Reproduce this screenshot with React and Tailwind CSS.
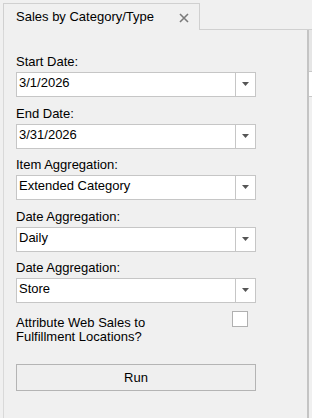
import React from 'react';

const fields = [
  { label: 'Start Date:', value: '3/1/2026' },
  { label: 'End Date:', value: '3/31/2026' },
  { label: 'Item Aggregation:', value: 'Extended Category' },
  { label: 'Date Aggregation:', value: 'Daily' },
  { label: 'Date Aggregation:', value: 'Store' },
];

const ComboBox = ({ value }) => (
  <div className="flex h-[25px] w-[240px] border border-[#c6c6c6] bg-white">
    <span className="flex-1 pl-[2px] pt-px leading-[17px]">{value}</span>
    <div className="flex w-[20px] items-center justify-center border-l border-[#c6c6c6]">
      <svg width="7" height="4" viewBox="0 0 7 4" className="-mt-px">
        <path d="M0 0h7L3.5 4z" fill="#555" />
      </svg>
    </div>
  </div>
);

export default function App() {
  return (
    <div className="flex h-[418px] w-[312px] flex-col overflow-hidden bg-[#f0f0f0] font-['Liberation_Sans',Arial,sans-serif] text-[13px] text-black">
      {/* tab strip */}
      <div className="flex h-[30px]">
        <div className="ml-[3px] mt-[3px] flex h-[27px] w-[197px] items-start justify-between border-x border-t border-[#d0d0d0] pl-[12px] pr-[10px] pt-[4px]">
          <span className="leading-[17px]">Sales by Category/Type</span>
          <svg width="10" height="10" viewBox="0 0 10 10" className="mt-[5px]">
            <path d="M1 1l8 8M9 1L1 9" stroke="#7a7a7a" strokeWidth="1.6" />
          </svg>
        </div>
        <div className="flex-1 border-b border-[#d0d0d0]" />
      </div>

      <div className="flex flex-1">
        {/* form panel */}
        <div className="ml-[3px] flex flex-1 flex-col border-l border-[#d9d9d9] pl-[12px] pt-[23px]">
          {fields.map((f, i) => (
            <div key={i} className={i > 0 ? 'mt-[7.5px]' : ''}>
              <div className="mb-[2px] leading-[17px]">{f.label}</div>
              <ComboBox value={f.value} />
            </div>
          ))}

          <div className="mt-[8px] flex w-[232px] justify-between">
            <div className="pt-[5px] leading-[14px]">
              Attribute Web Sales to
              <br />
              Fulfillment Locations?
            </div>
            <div className="h-[16px] w-[16px] border border-[#b0b0b0] bg-white" />
          </div>

          <button className="mt-[20px] h-[27px] w-[240px] border border-[#b4b4b4] bg-[#efefef] leading-[17px]">
            Run
          </button>
        </div>

        {/* neighbouring grid edge */}
        <div className="flex w-[5px] flex-col border-l-2 border-[#c4c4c4]">
          <div className="h-[42px] border-b border-[#c8c8c8] bg-[#e6e6e6]" />
          <div className="h-[25px] border-b border-[#c8c8c8] bg-white" />
        </div>
      </div>
    </div>
  );
}
